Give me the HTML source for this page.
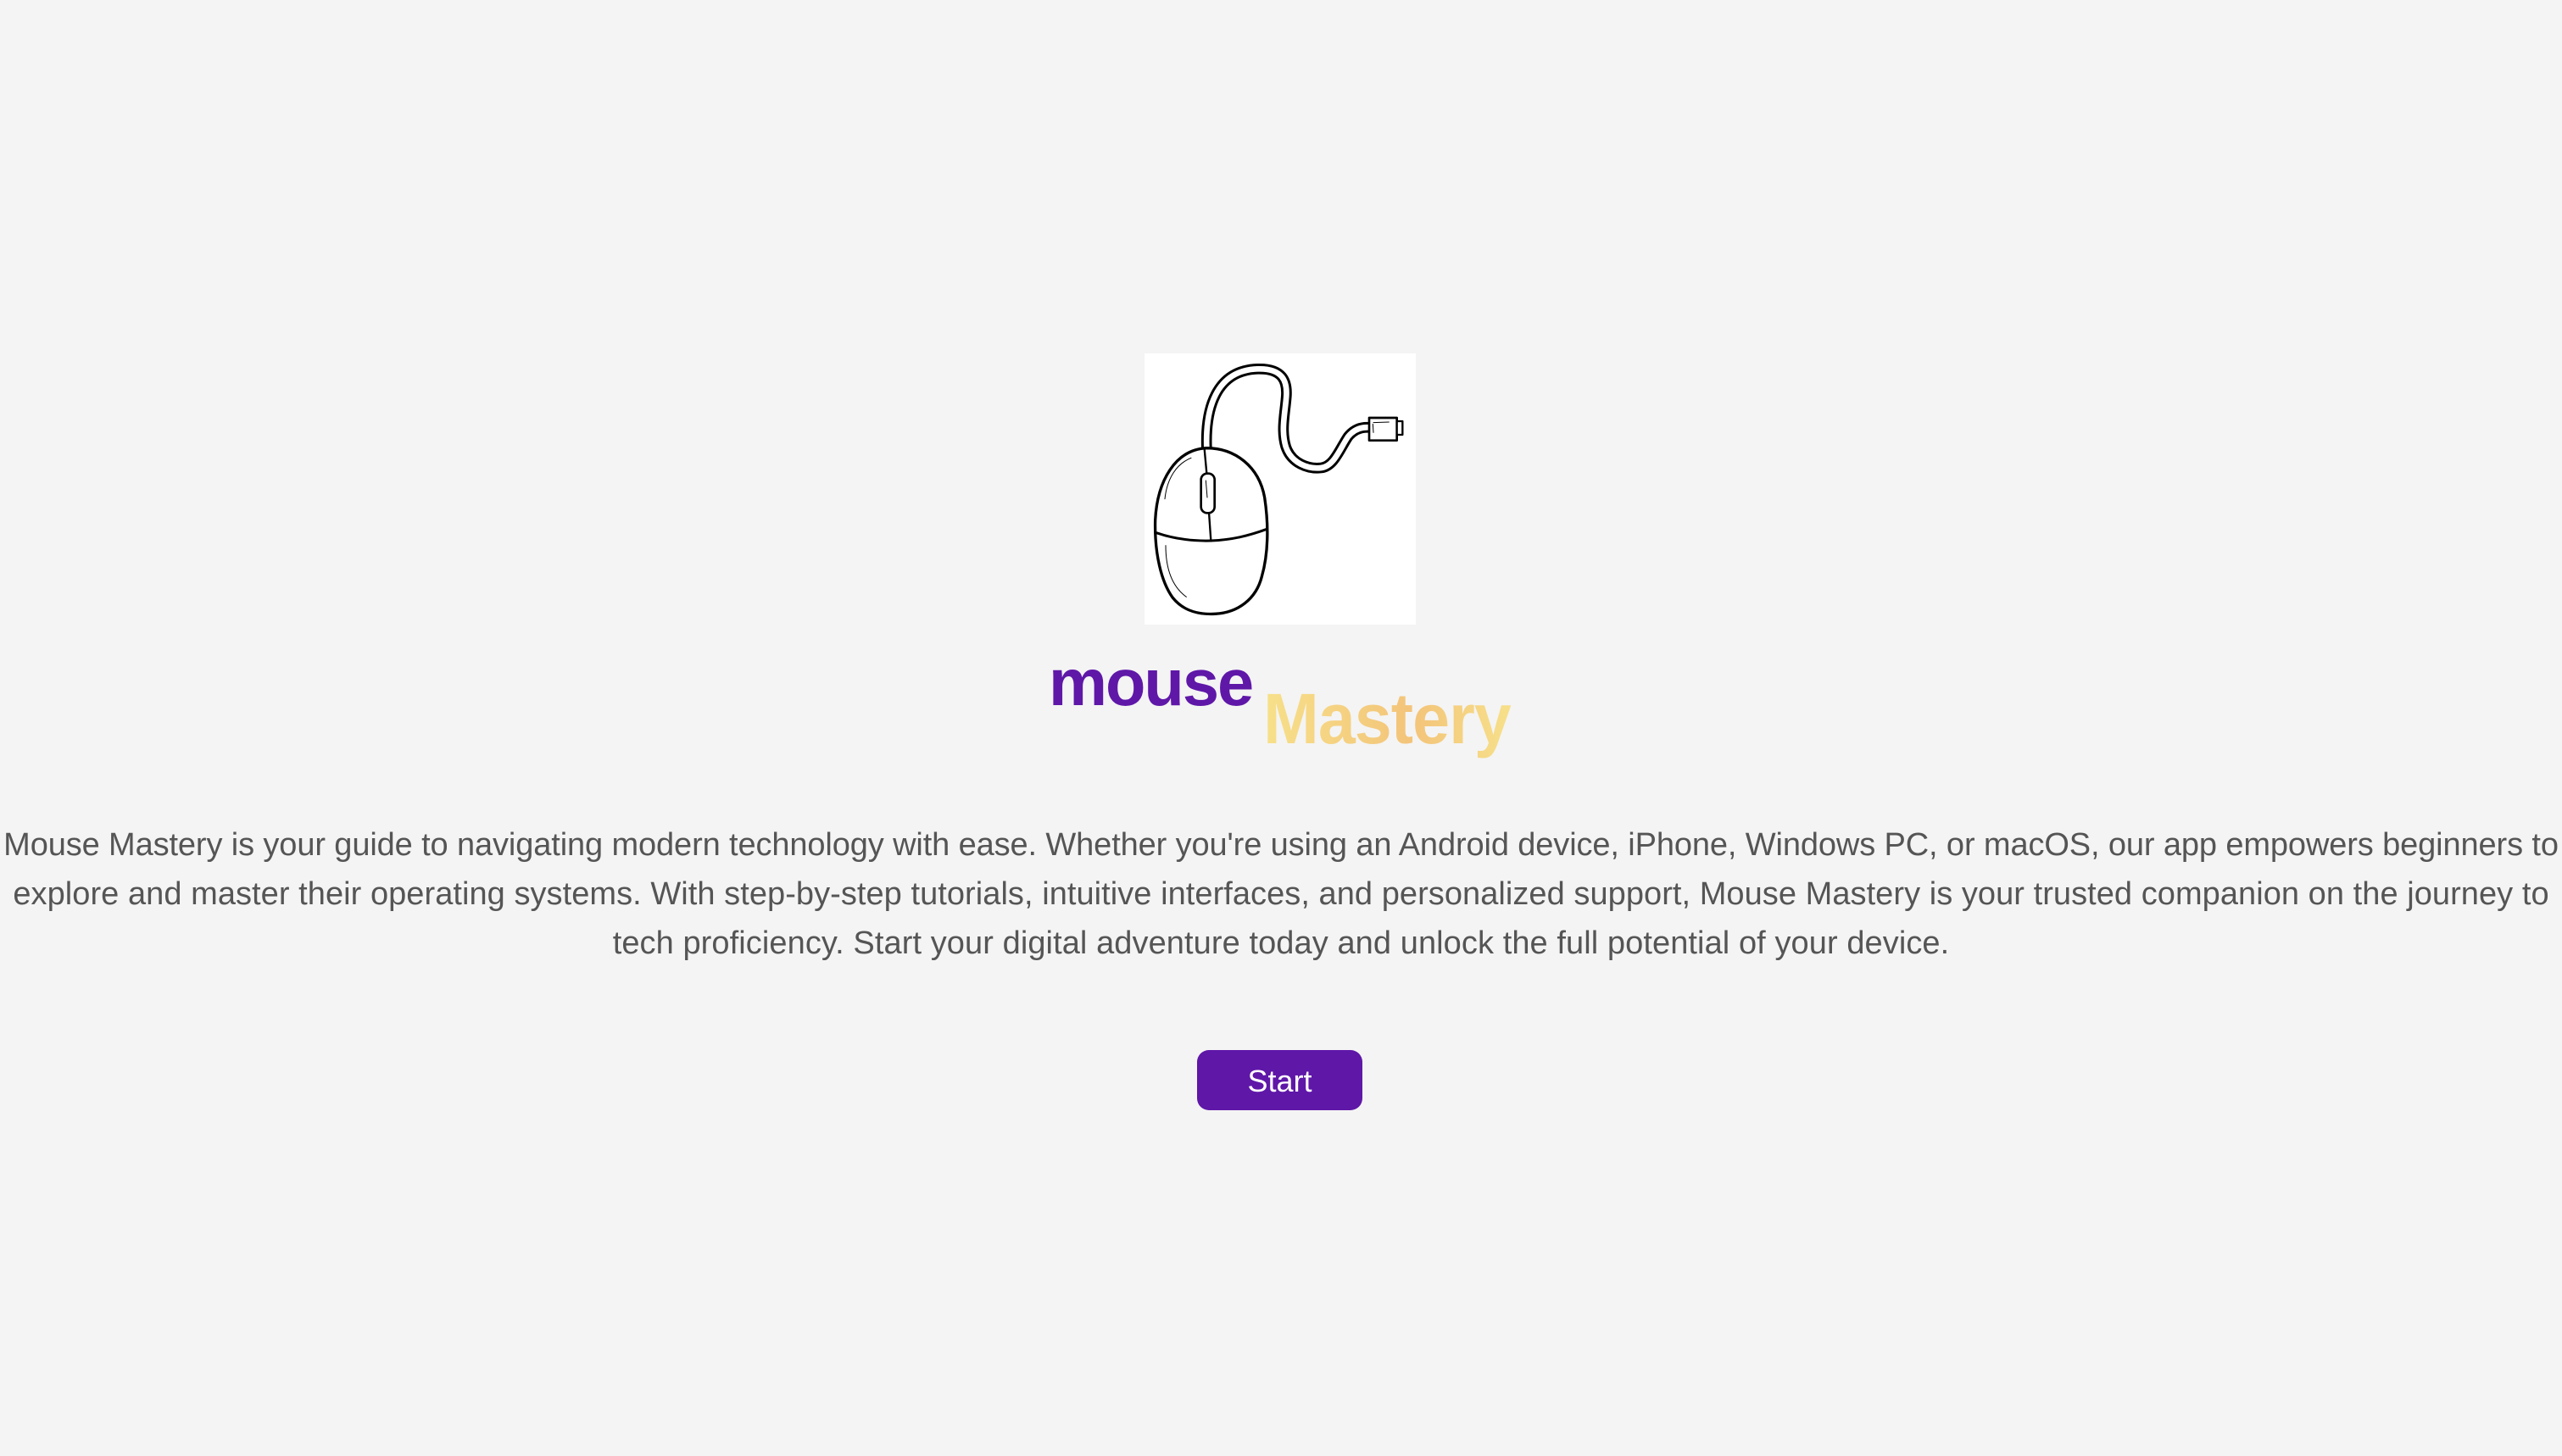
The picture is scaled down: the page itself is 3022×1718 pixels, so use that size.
<!DOCTYPE html>
<html><head><meta charset="utf-8"><style>
html,body{margin:0;padding:0;}
body{width:3022px;height:1718px;background:#f4f4f4;position:relative;overflow:hidden;font-family:"Liberation Sans",sans-serif;}
.img{position:absolute;left:1350px;top:417px;width:320px;height:320px;background:#fff;}
.t1{position:absolute;left:1237px;top:760px;font-size:78px;font-weight:bold;color:#5f17a8;letter-spacing:-2px;transform:scaleX(0.995);transform-origin:left top;}
.t2{position:absolute;left:1490px;top:800px;font-size:84px;font-weight:bold;letter-spacing:-1px;background:linear-gradient(90deg,#f7e08a,#f3c47a 60%,#f7e08a);-webkit-background-clip:text;background-clip:text;color:transparent;transform:scaleX(0.94);transform-origin:left top;}
.p{position:absolute;left:0;width:3022px;text-align:center;color:#555;font-size:38px;white-space:nowrap;}
.btn{position:absolute;left:1412px;top:1239px;width:195px;height:71px;background:#5f17a8;border-radius:14px;color:#fff;font-size:36px;text-align:center;line-height:73px;}
</style></head><body>
<div class="img"><svg width="320" height="320" viewBox="150 50 960 960">
<g fill="none" stroke="#000" stroke-linecap="round" stroke-linejoin="round">
<path d="M370,385 C365,250 400,110 550,105 C640,102 655,150 652,200 C648,260 632,320 650,380 C670,440 730,460 775,455 C820,450 840,390 870,345 C890,320 915,310 945,312" stroke-width="38"/>
<path d="M370,385 C365,250 400,110 550,105 C640,102 655,150 652,200 C648,260 632,320 650,380 C670,440 730,460 775,455 C820,450 840,390 870,345 C890,320 915,310 945,312" stroke="#fff" stroke-width="20"/>
<path d="M370,385 C260,390 195,500 188,640 C185,760 210,860 250,915 C290,965 350,975 400,972 C480,968 545,920 565,840 C588,760 590,660 575,560 C555,450 470,385 370,385 Z" fill="#fff" stroke-width="10"/>
<path d="M192,685 C250,705 310,715 385,713 C460,710 520,695 583,672" stroke-width="9"/>
<path d="M362,388 L370,475 M378,612 L385,713" stroke-width="7"/>
<rect x="350" y="475" width="48" height="140" rx="22" stroke-width="8" fill="#fff"/>
<path d="M367,500 L372,560" stroke-width="3"/>
<rect x="945" y="278" width="98" height="80" stroke-width="8" fill="#fff"/>
<rect x="1043" y="290" width="20" height="48" stroke-width="7" fill="#fff"/>
<path d="M960,295 L1015,293 M958,300 L960,330" stroke-width="3"/>
<path d="M315,420 C265,440 230,490 222,565" stroke-width="3"/>
<path d="M225,730 C225,800 240,870 298,912" stroke-width="3"/>
</g></svg></div>
<div class="t1">mouse</div>
<div class="t2">Mastery</div>
<div class="p" style="top:976px;letter-spacing:-0.12px">Mouse Mastery is your guide to navigating modern technology with ease. Whether you're using an Android device, iPhone, Windows PC, or macOS, our app empowers beginners to</div>
<div class="p" style="top:1034px;letter-spacing:0.05px">explore and master their operating systems. With step-by-step tutorials, intuitive interfaces, and personalized support, Mouse Mastery is your trusted companion on the journey to</div>
<div class="p" style="top:1092px;letter-spacing:0.08px">tech proficiency. Start your digital adventure today and unlock the full potential of your device.</div>
<div class="btn">Start</div>
</body></html>
